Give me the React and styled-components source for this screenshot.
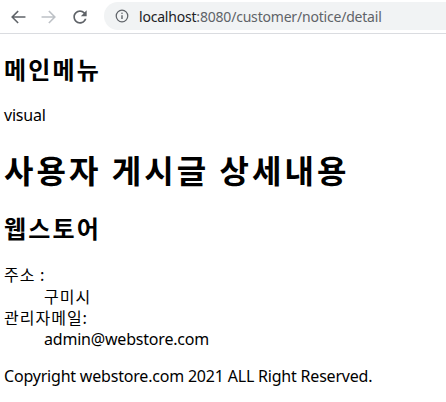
import React from "react";
import styled, { createGlobalStyle } from "styled-components";

const Global = createGlobalStyle`
  html, body { margin: 0; padding: 0; background: #fff; }
  body { font-family: "Noto Sans", "Noto Sans CJK KR", sans-serif; color: #000; }
`;

const Toolbar = styled.div`
  height: 33px;
  border-bottom: 1px solid #dadce0;
  display: flex;
  align-items: center;
  padding-left: 2px;
  box-sizing: content-box;
`;

const NavButton = styled.div`
  width: 31px;
  height: 32px;
  display: flex;
  align-items: center;
  justify-content: center;
  color: ${(p) => (p.$disabled ? "#bdc1c6" : "#5f6368")};
`;

const Omnibox = styled.div`
  margin-left: 9px;
  flex: 1;
  height: 28px;
  background: #f1f3f4;
  border-radius: 14px 0 0 14px;
  display: flex;
  align-items: center;
  padding-left: 11px;
  gap: 10px;
  margin-top: -1px;
`;

const Url = styled.span`
  font-family: "Noto Sans", sans-serif;
  font-size: 14px;
  color: #5f6368;
  letter-spacing: -0.2px;
  white-space: nowrap;
`;

const Host = styled.span`
  color: #202124;
`;

const Page = styled.main`
  padding: 0 4px;
  margin-top: -1px;
  font-family: "Noto Sans", "Noto Sans CJK KR", sans-serif;
  line-height: 1.34;
  display: flow-root;
`;

const H2 = styled.h2`
  font-family: "Noto Sans CJK KR", sans-serif;
  font-size: 24px;
  font-weight: 700;
  letter-spacing: 0.09em;
  margin: 19.92px 0;
`;

const H1 = styled.h1`
  font-family: "Noto Sans CJK KR", sans-serif;
  font-size: 32px;
  font-weight: 700;
  letter-spacing: 0.095em;
  margin: 21.44px 0;
`;

const P = styled.p`
  font-size: 16px;
  letter-spacing: -0.2px;
  margin: 16px 0;
`;

const Dl = styled.dl`
  font-size: 16px;
  margin: 16px 0;
`;

const Dt = styled.dt`
  font-family: "Noto Sans CJK KR", sans-serif;
  letter-spacing: 1px;
`;

const Dd = styled.dd`
  margin-left: 40px;
  font-family: ${(p) => (p.$ko ? '"Noto Sans CJK KR", sans-serif' : '"Noto Sans", sans-serif')};
  letter-spacing: ${(p) => (p.$ko ? "1px" : "-0.2px")};
`;

const Back = () => (
  <svg width="20" height="20" viewBox="0 0 24 24" fill="none" stroke="currentColor" strokeWidth="1.9" strokeLinecap="square">
    <path d="M20 12H5.5M11.5 5.5L5 12l6.5 6.5" />
  </svg>
);
const Fwd = () => (
  <svg width="20" height="20" viewBox="0 0 24 24" fill="none" stroke="currentColor" strokeWidth="1.9" strokeLinecap="square">
    <path d="M4 12h14.5M12.5 5.5L19 12l-6.5 6.5" />
  </svg>
);
const Reload = () => (
  <svg width="20" height="20" viewBox="0 0 24 24" fill="currentColor">
    <path d="M17.65 6.35C16.2 4.9 14.21 4 12 4c-4.42 0-7.99 3.58-7.99 8s3.57 8 7.99 8c3.73 0 6.84-2.55 7.73-6h-2.08c-.82 2.33-3.04 4-5.65 4-3.31 0-6-2.69-6-6s2.69-6 6-6c1.66 0 3.14.69 4.22 1.78L13 11h7V4l-2.35 2.35z" />
  </svg>
);
const InfoIcon = () => (
  <svg width="14" height="14" viewBox="0 0 16 16" fill="none" stroke="#5f6368">
    <circle cx="8" cy="8" r="6.6" strokeWidth="1.4" />
    <path d="M8 7v4.5" strokeWidth="1.6" />
    <circle cx="8" cy="4.9" r="0.9" fill="#5f6368" stroke="none" />
  </svg>
);

export default function App() {
  return (
    <>
      <Global />
      <Toolbar>
        <NavButton><Back /></NavButton>
        <NavButton $disabled><Fwd /></NavButton>
        <NavButton><Reload /></NavButton>
        <Omnibox>
          <InfoIcon />
          <Url><Host>localhost</Host>:8080/customer/notice/detail</Url>
        </Omnibox>
      </Toolbar>
      <Page>
        <H2>메인메뉴</H2>
        <P>visual</P>
        <H1>사용자 게시글 상세내용</H1>
        <H2>웹스토어</H2>
        <Dl>
          <Dt>주소 :</Dt>
          <Dd $ko>구미시</Dd>
          <Dt>관리자메일:</Dt>
          <Dd>admin@webstore.com</Dd>
        </Dl>
        <P>Copyright webstore.com 2021 ALL Right Reserved.</P>
      </Page>
    </>
  );
}
